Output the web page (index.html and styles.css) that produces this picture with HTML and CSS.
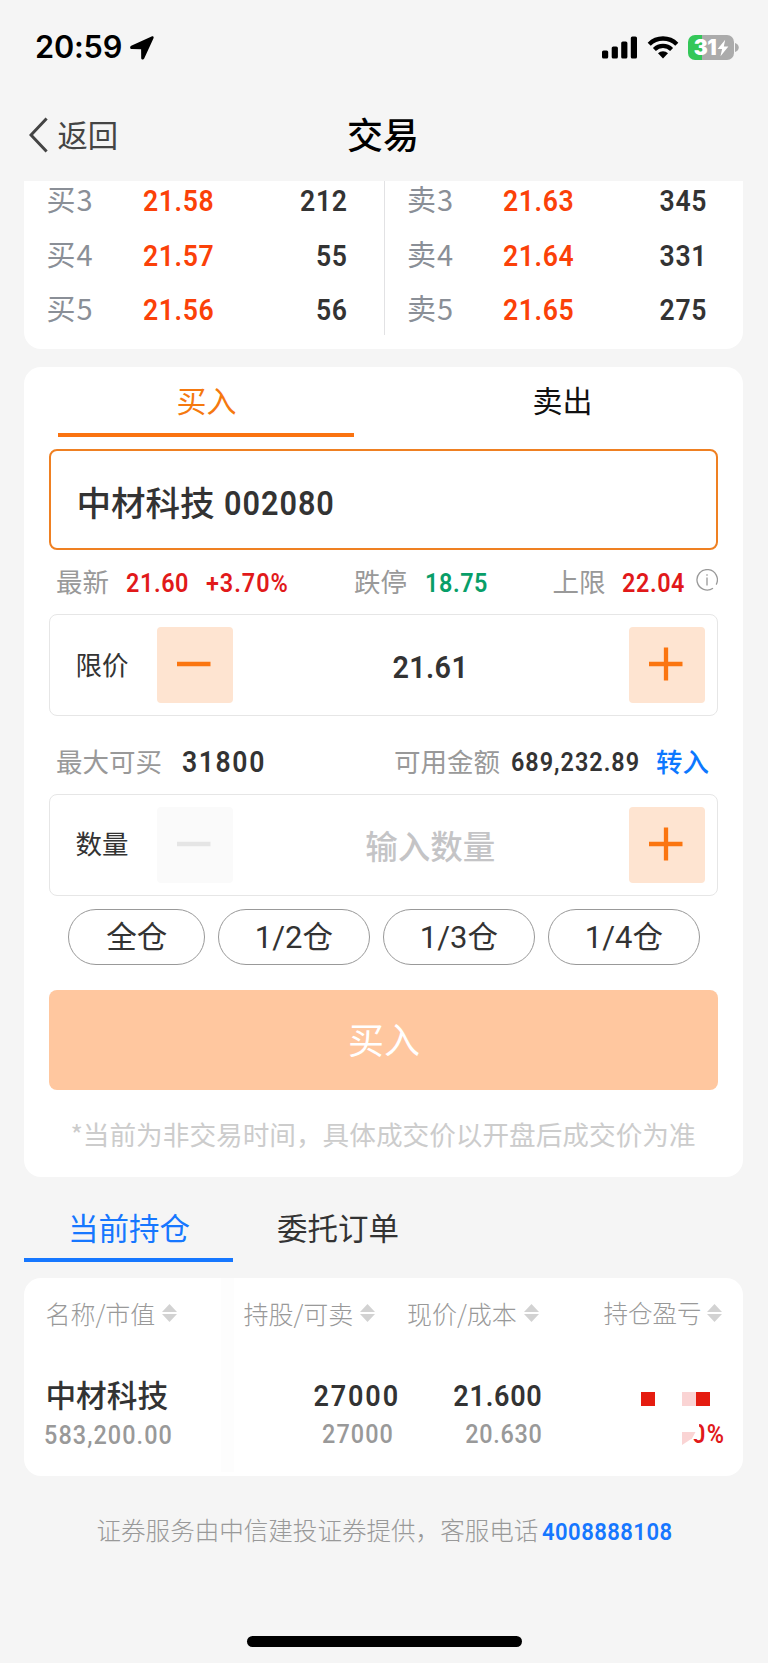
FILE: index.html
```html
<!DOCTYPE html>
<html lang="zh-CN">
<head>
<meta charset="utf-8">
<title>交易</title>
<link rel="stylesheet" href="styles.css">
</head>
<body>
<div class="screen">
  <header class="status">
    <span class="clock">20:59</span>
    <svg class="loc" width="24" height="24" viewBox="0 0 24 24"><path d="M1.2 9.800 21.600.4c1.400-.6 2.500.5 1.900 1.900L14.200 22.600c-.7 1.500-3 1.100-3-.6l-.1-8.700-9.300-.2c-1.900-.1-2.300-2.500-.6-3.300Z"/></svg>
    <svg class="signal" width="36" height="23" viewBox="0 0 36 23"><rect x="0" y="14.500" width="6.200" height="8" rx="1.600"/><rect x="9.700" y="10.500" width="6.200" height="12" rx="1.600"/><rect x="19.200" y="5.500" width="6.200" height="17" rx="1.600"/><rect x="28.800" y=".5" width="6.200" height="22" rx="1.600"/></svg>
    <svg class="wifi" width="32" height="24" viewBox="0 0 32 24"><path d="M2.2 9.2a19.6 19.6 0 0 1 27.6 0" fill="none" stroke="#000" stroke-width="4.4"/><path d="M7.4 14.4a12.2 12.2 0 0 1 17.2 0" fill="none" stroke="#000" stroke-width="4.2"/><path d="m16 23.4-5-5.1a7.2 7.2 0 0 1 10 0Z"/></svg>
    <span class="battery"><b>31</b><svg width="12" height="18" viewBox="0 0 12 18"><path d="M8.2.8.6 10h4.5l-1.6 7.2 7.9-9.6H6.8Z" fill="#fff"/></svg></span>
    <svg class="nub" width="4" height="9" viewBox="0 0 4 9"><path d="M0 0c5 1.400 5 7.600 0 9Z" fill="#ababab"/></svg>
  </header>

  <nav class="nav">
    <svg class="chev" width="19" height="36" viewBox="0 0 19 36"><path d="M17.600 1.500 2 18l15.600 16.500" fill="none" stroke="#444" stroke-width="3"/></svg>
    <span class="back">返回</span>
    <h1 class="title">交易</h1>
  </nav>

  <section class="card book">
    <div class="side">
      <div class="quote"><span>买3</span><b>21.58</b><i>212</i></div>
      <div class="quote"><span>买4</span><b>21.57</b><i>55</i></div>
      <div class="quote"><span>买5</span><b>21.56</b><i>56</i></div>
    </div>
    <div class="side sell">
      <div class="quote"><span>卖3</span><b>21.63</b><i>345</i></div>
      <div class="quote"><span>卖4</span><b>21.64</b><i>331</i></div>
      <div class="quote"><span>卖5</span><b>21.65</b><i>275</i></div>
    </div>
  </section>

  <section class="card order">
    <div class="tabs"><div class="tab on">买入</div><div class="tab">卖出</div></div>
    <div class="stock">中材科技<span class="din code">002080</span></div>
    <div class="info">
      <span>最新</span><b class="din red latest">21.60</b><b class="din red change">+3.70%</b>
      <span class="down">跌停</span><b class="din green">18.75</b>
      <span class="up">上限</span><b class="din red limit">22.04</b>
      <svg class="tip" width="22" height="22" viewBox="0 0 22 22" fill="none" stroke="#999" stroke-width="1.300"><path d="M17 19.200a10.200 10.200 0 1 1 3.200-3.600"/><path d="M11 8.500V16.500M11 5.200v1.600"/></svg>
    </div>
    <div class="field">
      <label>限价</label>
      <button class="step"><svg width="34" height="34" viewBox="0 0 34 34"><path d="M0 17h33.500"/></svg></button>
      <span class="din value">21.61</span>
      <button class="step"><svg width="34" height="34" viewBox="0 0 34 34"><path d="M0 17h33.500M17 .5v33"/></svg></button>
    </div>
    <div class="funds">
      <span>最大可买</span><b class="din max">31800</b>
      <span class="avail">可用金额</span><b class="din cash">689,232.89</b><a class="transfer">转入</a>
    </div>
    <div class="field">
      <label>数量</label>
      <button class="step off"><svg width="34" height="34" viewBox="0 0 34 34"><path d="M0 17h33.500"/></svg></button>
      <span class="value hint">输入数量</span>
      <button class="step"><svg width="34" height="34" viewBox="0 0 34 34"><path d="M0 17h33.500M17 .5v33"/></svg></button>
    </div>
    <div class="pills">
      <span class="pill all">全仓</span><span class="pill"><em>1/2</em>仓</span><span class="pill"><em>1/3</em>仓</span><span class="pill"><em>1/4</em>仓</span>
    </div>
    <button class="submit">买入</button>
    <p class="notice">*当前为非交易时间，具体成交价以开盘后成交价为准</p>
  </section>

  <div class="tabs2"><div class="tab2 on">当前持仓</div><div class="tab2">委托订单</div></div>

  <section class="card hold">
    <div class="col name">
      <div class="head">名称/市值<svg class="sort" width="15" height="18" viewBox="0 0 15 18"><path d="M7.500 0 15 8H0ZM0 10h15l-7.500 8Z"/></svg></div>
      <div class="main">中材科技</div>
      <div class="din sub">583,200.00</div>
    </div>
    <div class="col qty">
      <div class="head">持股/可卖<svg class="sort" width="15" height="18" viewBox="0 0 15 18"><path d="M7.500 0 15 8H0ZM0 10h15l-7.500 8Z"/></svg></div>
      <div class="din main">27000</div>
      <div class="din sub">27000</div>
    </div>
    <div class="col cost">
      <div class="head">现价/成本<svg class="sort" width="15" height="18" viewBox="0 0 15 18"><path d="M7.500 0 15 8H0ZM0 10h15l-7.500 8Z"/></svg></div>
      <div class="din main">21.600</div>
      <div class="din sub">20.630</div>
    </div>
    <div class="col gain">
      <div class="head">持仓盈亏<svg class="sort" width="15" height="18" viewBox="0 0 15 18"><path d="M7.500 0 15 8H0ZM0 10h15l-7.500 8Z"/></svg></div>
      <div class="main mask"><i class="dot"></i><i class="dot pale"></i><i class="dot"></i></div>
      <div class="sub pct"><svg class="corner" width="15" height="13" viewBox="0 0 15 13"><path d="M0 0h13.500L10 6.500 0 13Z" fill="#fad4d4"/></svg><span class="din rest"><span class="cut">0</span>%</span></div>
    </div>
  </section>

  <footer class="foot">证券服务由中信建投证券提供，客服电话<a class="din">4008888108</a></footer>
  <div class="home"></div>
</div>
</body>
</html>
```
FILE: styles.css
```css
* { box-sizing: border-box; }
body { margin: 0; background: #f5f5f5; font-family: "Noto Sans CJK SC", sans-serif; color: #333; }
button { border: 0; padding: 0; font: inherit; }
i, em { font-style: normal; }
svg { display: block; flex: none; }
.screen { width: 768px; height: 1663px; overflow: hidden; display: flex; flex-direction: column; }
/* narrow numerals */
.din, .quote b, .quote i { font-family: Roboto, sans-serif; font-weight: 600; transform: scaleX(.9); transform-origin: 0 50%; }

.status { height: 95px; flex: none; display: flex; align-items: center; padding: 0 29px 0 35px; }
.clock { font: 600 30.700px/40px Inter, sans-serif; color: #000; width: 95px; letter-spacing: -.2px; margin-top: -1px; }
.loc { margin-right: auto; }
.signal { margin-right: 9px; }
.wifi { margin-right: 9px; margin-top: -2px; }
.battery { width: 46px; height: 25px; border-radius: 7px; background: linear-gradient(90deg, #34c759 14.500px, #ababab 14.500px); display: flex; align-items: center; justify-content: center; color: #fff; font: 700 21px/25px Inter, sans-serif; letter-spacing: -.6px; }
.battery b { margin-left: 1px; margin-right: 1px; }
.nub { margin-left: 1px; }

.nav { height: 86px; flex: none; display: grid; grid-template-columns: 29px 200px 1fr 229px; align-items: center; padding: 0 0 6px; }
.nav .chev { grid-column: 1; margin-left: 29px; }
.back { grid-column: 2; padding-left: 28.500px; font-size: 30.300px; line-height: 40px; color: #444; margin-top: -3px; }
.title { grid-column: 3; justify-self: center; margin: -5px 0 0 -2px; font-size: 36px; line-height: 50px; font-weight: 500; color: #000; }

.card { width: 719px; margin-left: 24.400px; flex: none; background: #fff; border-radius: 17px; }
.book { height: 168px; border-radius: 0 0 17px 17px; display: flex; }
.side { width: 360.500px; height: 154px; border-right: 1px solid #e2e2e4; padding-left: 22px; }
.side.sell { width: 358px; border: 0; padding-left: 22px; }
.quote { height: 54.600px; display: grid; grid-template-columns: 96.500px 80px 124.500px; align-items: center; }
.quote:first-child { height: 47.600px; padding-bottom: 7px; }
.quote span { color: #8a8f97; font-size: 29px; line-height: 34px; margin-top: -6px; letter-spacing: 1px; }
.quote b, .quote i { font-size: 29.500px; line-height: 36px; letter-spacing: .7px; }
.quote b { color: #fb4108; }
.quote i { text-align: right; transform-origin: 100% 50%; }
.sell .quote { grid-template-columns: 96px 80px 124px; }

.order { margin-top: 18px; height: 810px; padding: 0 25px; }
.tabs { display: flex; height: 70px; padding: 0 8px 0 9px; justify-content: space-between; }
.tab { width: 296px; height: 70px; text-align: center; font-size: 30px; line-height: 64px; color: #111; }
.tab.on { color: #f5790f; border-bottom: 4px solid #fa7311; }
.stock { margin-top: 12px; height: 101px; border: 2px solid #ef8022; border-radius: 8px; padding: 0 25px; font-size: 34.600px; font-weight: 500; line-height: 101px; color: #333; display: flex; }
.code { font-size: 34px; margin-left: 9px; line-height: 104px; letter-spacing: 1.100px; }
.info, .funds { display: flex; align-items: center; font-size: 26.500px; color: #999; padding-left: 6.500px; white-space: nowrap; }
.info { height: 64px; }
.info span, .funds span, .transfer { line-height: 40px; margin-top: -3px; }
.info b { font-size: 26px; line-height: 40px; margin-top: 1px; letter-spacing: .65px; }
.red { color: #e1191a; }
.green { color: #089e68; }
.latest { margin-left: 17.500px; width: 80px; }
.info .change { width: 147.500px; letter-spacing: 1.100px; }
.info .green { margin-left: 18.500px; width: 127px; }
.limit { margin-left: 17px; width: 74px; }
.tip { margin-top: -4px; }
.field { height: 102px; border: 1.500px solid #e6e6e6; border-radius: 8px; display: flex; align-items: center; padding: 0 12px 0 25px; }
.field label { width: 81.500px; font-size: 26.500px; line-height: 40px; margin-top: -3px; }
.step { width: 76px; height: 76px; border-radius: 4px; background: #fee4d1; display: flex; align-items: center; justify-content: center; padding: 0 2px 2px 0; flex: none; }
.step svg { stroke: #fb7510; stroke-width: 4.300px; fill: none; }
.step.off { background: #fafafa; }
.step.off svg { stroke: #e5e5e5; }
.value { flex: 1; text-align: center; font-size: 32px; line-height: 40px; margin-top: 4px; transform-origin: 50% 50%; letter-spacing: .4px; padding-right: 2px; }
.hint { font-size: 32.500px; color: #c4c4c6; margin-top: 0; font-weight: 500; letter-spacing: 0; }
.funds { height: 77.500px; padding-top: 15px; }
.max { font-size: 29.500px; color: #333; margin-left: 20px; width: 133px; line-height: 40px; margin-right: 79px; letter-spacing: 1.800px; }
.cash { font-size: 26px; color: #333; margin-left: 11px; width: 145px; line-height: 40px; letter-spacing: 1.100px; margin-top: -1px; }
.transfer { color: #0c78ff; font-weight: 500; }
.pills { display: flex; gap: 12.500px; margin: 13px 0 25px 18.800px; }
.pill { width: 152.500px; height: 56px; border: 1.500px solid #999; border-radius: 28px; text-align: center; font-size: 30.500px; line-height: 51px; }
.pill.all { width: 137px; }
.pill em { font-family: Roboto, sans-serif; font-size: 31px; }
.submit { display: block; width: 669px; height: 100px; border-radius: 8px; background: #ffc79f; color: #fff; font-size: 36px; line-height: 96px; padding-bottom: 4px; }
.notice { margin: 24px 0 0 21px; font-size: 26.650px; line-height: 40px; color: #ccc; white-space: nowrap; }

.tabs2 { display: flex; flex: none; height: 85px; margin: 0 0 16px 24.400px; }
.tab2 { width: 209px; font-size: 30.500px; line-height: 101px; text-align: center; }
.tab2.on { color: #1677ff; border-bottom: 4px solid #1677ff; }

.hold { height: 198px; display: flex; padding-top: 14px; }
.col { position: relative; white-space: nowrap; }
.name { width: 210px; padding-left: 21px; }
.name::after { content: ""; position: absolute; right: 0; top: -14px; width: 13px; height: 194px; background: #fdfdfd; }
.qty { width: 162px; padding-left: 9px; }
.cost { width: 146px; padding-left: 10.500px; }
.gain { width: 182px; padding-left: 61px; }
.head { display: flex; align-items: center; height: 42px; font-size: 25px; line-height: 40px; color: #999; padding-bottom: 1px; font-weight: 300; }
.sort { fill: #d2d2d2; margin-left: 7px; margin-top: 0; }
.gain .head { font-size: 24.500px; }
.gain .sort { margin-left: 6px; }
.main { height: 42px; margin-top: 38px; font-size: 30.700px; font-weight: 500; line-height: 44px; }
.main.din { font-size: 30px; font-weight: 600; line-height: 48px; }
.sub { font-size: 26px; line-height: 42px; color: #999; font-weight: 500; }
.name .sub { margin-left: -1.500px; letter-spacing: 1.200px; }
.qty .din, .cost .din { text-align: right; transform-origin: 100% 50%; }
.qty .main { margin-right: -4px; letter-spacing: 2.100px; }
.qty .sub { margin: -1px 2px 0 0; letter-spacing: 1.200px; }
.cost .main { margin-right: 0; letter-spacing: .8px; }
.cost .sub { margin: -1px 0 0; letter-spacing: .8px; }
.mask { display: flex; padding: 20px 0 0 38px; }
.dot { width: 14px; height: 14px; background: #e51c10; }
.dot.pale { background: #fad4d4; margin-left: 27px; }
.pct { display: flex; align-items: center; padding-left: 79px; color: #e1191a; margin-top: -1px; }
.corner { margin-top: 8px; }
.rest { display: flex; margin-left: -5px; letter-spacing: 1.500px; }
.cut { clip-path: polygon(48% 0, 100% 0, 100% 100%, 0 100%, 0 62%, 48% 62%); }

.foot { margin: 34px 0 0 96.500px; flex: none; height: 40px; display: flex; font-size: 24.550px; line-height: 40px; color: #999; white-space: nowrap; font-weight: 300; }
.foot a { color: #1677ff; font-size: 24.500px; line-height: 43px; margin-left: 4px; letter-spacing: .5px; }
.home { width: 275px; height: 11px; border-radius: 6px; background: #000; flex: none; margin: 86px 0 0 246.500px; }
```
